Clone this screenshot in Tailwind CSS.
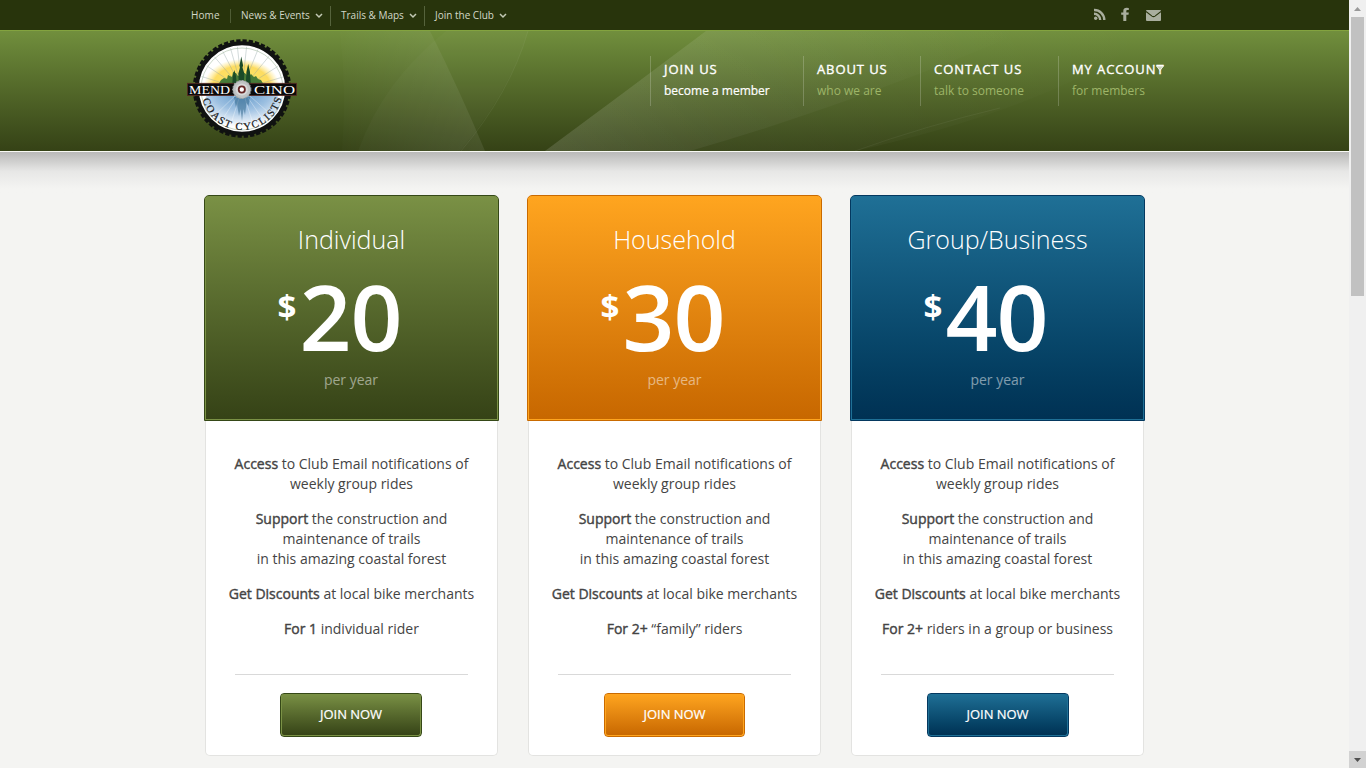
<!DOCTYPE html>
<html lang="en">
<head>
<meta charset="utf-8">
<title>Mendocino Coast Cyclists</title>
<script src="https://cdn.jsdelivr.net/npm/@tailwindcss/browser@4"></script>
</head>
<body class="flex h-[768px] w-[1366px] overflow-hidden bg-[#f4f4f2] font-['Open_Sans',sans-serif]">
<div class="w-[1349px] shrink-0">
  <div class="flex h-[30px] justify-between bg-[#28340c] pr-[188px] pl-[191px]">
    <nav class="flex items-center pt-px text-[10px] whitespace-nowrap text-[#d3d8c8]">
      <a class="flex h-3.5 w-[40px] items-center border-r border-[#4f5c35] tracking-[0.1px]">Home</a>
      <a class="flex h-5 w-[100px] items-center gap-1 border-r border-[#56633c] pl-[10px]"><span class="w-[70px]">News &amp; Events</span><svg class="h-2 w-2" viewBox="0 0 8 8" fill="none" stroke="#c3c9b5" stroke-width="1.5"><path d="M1 2l3 3 3-3"/></svg></a>
      <a class="flex h-5 w-[94px] items-center gap-1 border-r border-[#56633c] pl-[10px]"><span class="w-[64px]">Trails &amp; Maps</span><svg class="h-2 w-2" viewBox="0 0 8 8" fill="none" stroke="#c3c9b5" stroke-width="1.5"><path d="M1 2l3 3 3-3"/></svg></a>
      <a class="flex h-5 items-center gap-1 pl-[10px]"><span class="w-[60px]">Join the Club</span><svg class="h-2 w-2" viewBox="0 0 8 8" fill="none" stroke="#c3c9b5" stroke-width="1.5"><path d="M1 2l3 3 3-3"/></svg></a>
    </nav>
    <svg class="h-[30px] w-[70px]" viewBox="0 0 70 30" fill="#a9ae9e">
      <circle cx="4.700" cy="18.300" r="1.700"/>
      <path d="M3 13.800a6.200 6.200 0 0 1 6.200 6.200M3 10a10 10 0 0 1 10.300 10" fill="none" stroke="#a9ae9e" stroke-width="2.400"/>
      <path d="M31.500 21v-6.200h-2.100v-2.200h2.100v-1.500c0-2.200 1.300-3.300 3.400-3.300l2.100.1v2.200h-1.300c-.9 0-1.200.4-1.200 1.100v1.400H37l-.3 2.200h-2.200V21z" transform="translate(.8)"/>
      <rect x="55" y="10" width="15" height="11" rx="1"/>
      <path d="M55 11.500l6 4.600q1.500 1 3 0l6-4.600" fill="none" stroke="#28340c" stroke-width="1.100"/>
    </svg>
  </div>
  <header class="relative h-[122px] border-t border-b border-t-[#83a33f] border-b-[#f8f9f4] bg-linear-to-b from-[#718f3d] to-[#354216]">
    <svg class="absolute inset-0 h-[120px] w-[1349px]" viewBox="0 31 1349 120">
      <defs>
        <linearGradient id="ra" x1="0" x2="1"><stop offset="0" stop-color="#fff" stop-opacity=".01"/><stop offset="1" stop-color="#fff" stop-opacity=".08"/></linearGradient>
        <linearGradient id="rb" x1="0" x2="1"><stop offset="0" stop-color="#fff" stop-opacity=".08"/><stop offset=".3" stop-color="#fff" stop-opacity=".05"/><stop offset="1" stop-color="#fff" stop-opacity="0"/></linearGradient>
      </defs>
      <path d="M340 31h90q30 60 55 120H342q5-60-2-120z" fill="url(#ra)"/>
      <path d="M446 31h82q-20 64-68 120H358q25-70 88-120z" fill="#fff" fill-opacity=".025"/>
      <path d="M528 31q-18 62-67 120" fill="none" stroke="#fff" stroke-opacity=".06"/>
      <path d="M545 151Q625 92 706 31h320Q850 105 690 151z" fill="url(#rb)"/>
      <path d="M545 151Q625 92 706 31h450Q1060 105 855 151z" fill="url(#rb)" fill-opacity=".75"/>
      <path d="M855 151q70-25 145-43" fill="none" stroke="#fff" stroke-opacity=".05"/>
    </svg>
    <div class="relative flex justify-between pl-[187px]">
      <svg class="mt-[7px] h-[101px] w-[111px]" viewBox="187 38 111 101">
        <defs>
          <radialGradient id="sun"><stop offset="0" stop-color="#fdea62"/><stop offset=".75" stop-color="#fddc62"/><stop offset="1" stop-color="#ffe98c" stop-opacity="0"/></radialGradient>
          <radialGradient id="sea" cx=".5" cy=".25" r=".75"><stop offset="0" stop-color="#5f97c8"/><stop offset=".5" stop-color="#9dc0e1"/><stop offset="1" stop-color="#fff"/></radialGradient>
          <clipPath id="rim"><circle cx="242" cy="89" r="42.500"/></clipPath>
          <path id="arc" d="M201.500 89.500a40.500 40.500 0 0 0 81 0"/>
        </defs>
        <circle cx="242" cy="88.500" r="47.800" fill="none" stroke="#101211" stroke-width="3" stroke-dasharray="4.300 1.960"/>
        <circle cx="242" cy="88.500" r="45.200" fill="#fff" stroke="#101211" stroke-width="4"/>
        <g clip-path="url(#rim)">
          <ellipse cx="241.500" cy="86" rx="38" ry="27" fill="url(#sun)"/>
          <ellipse cx="242" cy="104" rx="38" ry="23" fill="url(#sea)"/>
          <path d="M242 89L220 46m22 43L229 43m13 46L237 43m5 46L247 43m-5 46L259 47m-17 42L270 55m-28 34L280 65m-38 24L283 77m-41 12L212 54m30 35L204 64m38 25L200 76" stroke="#8ca0a2" stroke-width=".7" opacity=".55"/>
          <path d="M242 89L208 122m34-33L217 128m25-39L229 130m13-41L255 130m-13-41L268 127m-26-38L277 120" stroke="#fff" stroke-width=".6" opacity=".55"/>
          <path d="M218 85l3-5 3-2 3 1 1-4 4 2 1-5 3 1 2 3h3l2-4 3 2 2 3 3-3 3 3 2-1 2 3 3 1 3 5z" fill="#477b38"/>
          <path d="M241.300 56.500l-1.800 9 .6 2-1.800 6 .5 10h5l.5-10-1.800-6 .6-2zM248.200 64l-1.800 8-.6 12h5l-.8-12zM234.300 70l-1.500 6-.5 8h4.500l-.8-8z" fill="#1b4b28"/>
          <path d="M234 97h16l-1.500 9-2-3-1.500 12-1.500-6-1.500 12-1.500-12-1.500 7-2-12-1 4z" fill="#2e6387" opacity=".5"/>
        </g>
        <circle cx="242" cy="89" r="41" fill="none" stroke="#a8bda5" stroke-width=".6"/>
        <rect x="187.500" y="83.300" width="109" height="12.200" fill="#0c0b0b" stroke="#5b2b25" stroke-width=".8"/>
        <g font-family="Liberation Serif" fill="#fff" font-size="12.500"><text x="189" y="94" textLength="41" lengthAdjust="spacingAndGlyphs">MEND</text><text x="254" y="94" textLength="41" lengthAdjust="spacingAndGlyphs">CINO</text></g>
        <circle cx="241.800" cy="89.500" r="9" fill="#bfc3c4" stroke="#9fa5a6" stroke-width="1.200" stroke-dasharray="2 1"/>
        <circle cx="241.800" cy="89.500" r="6" fill="#d8d9d9"/><circle cx="241.800" cy="89.500" r="3.100" fill="#fff" stroke="#642625" stroke-width="1.800"/>
        <text font-family="Liberation Serif" font-size="10.500" fill="#171717" stroke="#171717" stroke-width=".2"><textPath href="#arc" startOffset="10" textLength="108" lengthAdjust="spacing">COAST CYCLISTS</textPath></text>
      </svg>
      <nav class="mt-[25px] flex h-[50px] text-[12px] leading-[18px] whitespace-nowrap">
        <a class="flex w-[153px] flex-col gap-1 border-l border-white/20 pt-1 pl-[13px] text-white"><span class="text-[13px] tracking-[0.95px] [-webkit-text-stroke:0.35px]">JOIN US</span><span class="[-webkit-text-stroke:0.2px]">become a member</span></a>
        <a class="flex w-[117px] flex-col gap-1 border-l border-white/20 pt-1 pl-[13px] text-[#9eb568]"><span class="text-[13px] tracking-[0.9px] text-white [-webkit-text-stroke:0.35px]">ABOUT US</span><span>who we are</span></a>
        <a class="flex w-[138px] flex-col gap-1 border-l border-white/20 pt-1 pl-[13px] text-[#9eb568]"><span class="text-[13px] tracking-[0.95px] text-white [-webkit-text-stroke:0.35px]">CONTACT US</span><span>talk to someone</span></a>
        <a class="relative flex w-[291px] flex-col gap-1 border-l border-white/20 pt-1 pl-[13px] text-[#9eb568]"><span class="text-[13px] tracking-[0.9px] text-white [-webkit-text-stroke:0.35px]">MY ACCOUNT</span><span>for members</span><svg class="absolute top-[9px] left-[97px] h-[7px] w-2" viewBox="0 0 8 7"><path d="M.5 1h7L4 5.500z" fill="#cbd3b9" stroke="#fff" stroke-width=".8"/></svg></a>
      </nav>
    </div>
  </header>
  <div class="h-[43px] bg-linear-to-b from-[#b9b9b8] via-[#e7e7e6] via-45% to-[#f4f4f2] to-85%"></div>
  <main class="flex gap-7 pl-[204px]">
    <section class="w-[295px] text-center">
      <div class="h-[226px] rounded-t-[5px] border border-[#354817] bg-linear-to-b from-[#7a9145] to-[#354216]">
        <div class="flex h-[224px] flex-col items-center rounded-t border border-t-0 border-[#7a9145] text-white">
          <h2 class="mt-[25px] text-[25px] leading-[36px] font-light">Individual</h2>
          <div class="mt-[13px] mr-[24px] flex h-[92px] items-start"><span class="mt-[17px] mr-[3px] text-[33px] leading-[40px] font-bold">$</span><span class="text-[91px] leading-[92px] font-semibold tracking-[-1px]">20</span></div>
          <p class="mt-[8px] mr-px text-[14px] leading-5 text-white/50">per year</p>
        </div>
      </div>
      <div class="mx-px flex h-[335px] flex-col items-center rounded-b-[5px] border border-t-0 border-[#e3e3e1] bg-white pt-[33px] text-[14px] leading-5 whitespace-nowrap text-[#444]">
        <div class="flex h-[185px] flex-col gap-[15px]">
          <p><b class="font-normal [-webkit-text-stroke:0.4px]">Access</b> to Club Email notifications of<br>weekly group rides</p>
          <p><b class="font-normal [-webkit-text-stroke:0.4px]">Support</b> the construction and<br>maintenance of trails<br>in this amazing coastal forest</p>
          <p><b class="font-normal [-webkit-text-stroke:0.4px]">Get Discounts</b> at local bike merchants</p>
          <p><b class="font-normal [-webkit-text-stroke:0.4px]">For 1</b> individual rider</p>
        </div>
        <hr class="mt-[35px] w-[233px] border-[#d9d9d9]">
        <a class="mt-[18px] mr-px flex h-11 w-[142px] rounded-[4px] border border-[#354817] bg-linear-to-b from-[#7a9145] to-[#354216]"><span class="flex w-full items-center justify-center rounded-[3px] border border-t-0 border-[#7a9145] pb-px text-[13px] tracking-[-0.05px] text-white [-webkit-text-stroke:0.2px]">JOIN NOW</span></a>
      </div>
    </section>
    <section class="w-[295px] text-center">
      <div class="h-[226px] rounded-t-[5px] border border-[#c96a00] bg-linear-to-b from-[#ffa51f] to-[#c76700]">
        <div class="flex h-[224px] flex-col items-center rounded-t border border-t-0 border-[#ffa51f] text-white">
          <h2 class="mt-[25px] text-[25px] leading-[36px] font-light">Household</h2>
          <div class="mt-[13px] mr-[24px] flex h-[92px] items-start"><span class="mt-[17px] mr-[3px] text-[33px] leading-[40px] font-bold">$</span><span class="text-[91px] leading-[92px] font-semibold tracking-[-1px]">30</span></div>
          <p class="mt-[8px] text-[14px] leading-5 text-white/50">per year</p>
        </div>
      </div>
      <div class="mx-px flex h-[335px] flex-col items-center rounded-b-[5px] border border-t-0 border-[#e3e3e1] bg-white pt-[33px] text-[14px] leading-5 whitespace-nowrap text-[#444]">
        <div class="flex h-[185px] flex-col gap-[15px]">
          <p><b class="font-normal [-webkit-text-stroke:0.4px]">Access</b> to Club Email notifications of<br>weekly group rides</p>
          <p><b class="font-normal [-webkit-text-stroke:0.4px]">Support</b> the construction and<br>maintenance of trails<br>in this amazing coastal forest</p>
          <p><b class="font-normal [-webkit-text-stroke:0.4px]">Get Discounts</b> at local bike merchants</p>
          <p><b class="font-normal [-webkit-text-stroke:0.4px]">For 2+</b> “family” riders</p>
        </div>
        <hr class="mt-[35px] w-[233px] border-[#d9d9d9]">
        <a class="mt-[18px] flex h-11 w-[141px] rounded-[4px] border border-[#c96a00] bg-linear-to-b from-[#ffa51f] to-[#c76700]"><span class="flex w-full items-center justify-center rounded-[3px] border border-t-0 border-[#ffa51f] pb-px text-[13px] tracking-[-0.05px] text-white [-webkit-text-stroke:0.2px]">JOIN NOW</span></a>
      </div>
    </section>
    <section class="w-[295px] text-center">
      <div class="h-[226px] rounded-t-[5px] border border-[#04385f] bg-linear-to-b from-[#1f7096] to-[#003153]">
        <div class="flex h-[224px] flex-col items-center rounded-t border border-t-0 border-[#1f7096] text-white">
          <h2 class="mt-[25px] text-[25px] leading-[36px] font-light">Group/Business</h2>
          <div class="mt-[13px] mr-[24px] flex h-[92px] items-start"><span class="mt-[17px] mr-[3px] text-[33px] leading-[40px] font-bold">$</span><span class="text-[91px] leading-[92px] font-semibold tracking-[-1px]">40</span></div>
          <p class="mt-[8px] text-[14px] leading-5 text-white/50">per year</p>
        </div>
      </div>
      <div class="mx-px flex h-[335px] flex-col items-center rounded-b-[5px] border border-t-0 border-[#e3e3e1] bg-white pt-[33px] text-[14px] leading-5 whitespace-nowrap text-[#444]">
        <div class="flex h-[185px] flex-col gap-[15px]">
          <p><b class="font-normal [-webkit-text-stroke:0.4px]">Access</b> to Club Email notifications of<br>weekly group rides</p>
          <p><b class="font-normal [-webkit-text-stroke:0.4px]">Support</b> the construction and<br>maintenance of trails<br>in this amazing coastal forest</p>
          <p><b class="font-normal [-webkit-text-stroke:0.4px]">Get Discounts</b> at local bike merchants</p>
          <p><b class="font-normal [-webkit-text-stroke:0.4px]">For 2+</b> riders in a group or business</p>
        </div>
        <hr class="mt-[35px] w-[233px] border-[#d9d9d9]">
        <a class="mt-[18px] flex h-11 w-[142px] rounded-[4px] border border-[#04385f] bg-linear-to-b from-[#1f7096] to-[#003153]"><span class="flex w-full items-center justify-center rounded-[3px] border border-t-0 border-[#1f7096] pb-px text-[13px] tracking-[-0.05px] text-white [-webkit-text-stroke:0.2px]">JOIN NOW</span></a>
      </div>
    </section>
  </main>
</div>
<aside class="flex w-[17px] flex-col bg-[#f0f0f0]">
  <div class="flex h-[17px] items-center justify-center"><svg class="h-1 w-[7px]" viewBox="0 0 7 4"><path d="M0 4l3.500-4L7 4z" fill="#999"/></svg></div>
  <div class="mx-[2px] h-[279px] bg-[#c1c1c1]"></div>
  <div class="mt-auto flex h-[17px] items-center justify-center bg-[#d2d2d2]"><svg class="h-1 w-[7px]" viewBox="0 0 7 4"><path d="M0 0l3.500 4L7 0z" fill="#505050"/></svg></div>
</aside>
</body>
</html>
